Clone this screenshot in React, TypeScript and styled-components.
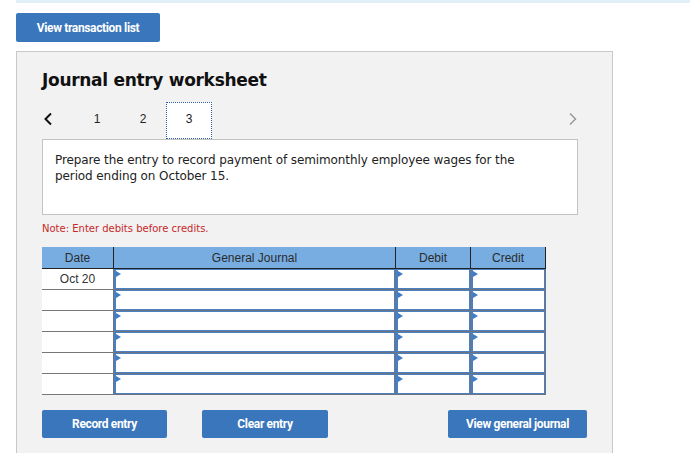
import styled, { createGlobalStyle } from 'styled-components';

const GlobalStyle = createGlobalStyle`
  body {
    margin: 0;
    background: #fff;
    font-family: "Liberation Sans", Arial, sans-serif;
    overflow: hidden;
  }
`;

const Page = styled.div`
  padding-left: 16px;
  width: 674px;
`;

const TopStrip = styled.div`
  height: 3px;
  background: #e1eff9;
`;

const BlueButton = styled.button<{ $w: number }>`
  width: ${(p) => p.$w}px;
  height: 29px;
  border: none;
  border-radius: 2px;
  background: #3a76bb;
  color: #fff;
  font-family: Roboto, "Liberation Sans", sans-serif;
  font-weight: 700;
  font-size: 12px;
  letter-spacing: -0.35px;
  padding: 0;
  cursor: pointer;
`;

const TopButton = styled(BlueButton)`
  margin-top: 10px;
  display: block;
`;

const Panel = styled.div`
  margin-top: 9px;
  width: 570px;
  height: 384px;
  background: #f2f2f2;
  border: 1px solid #c8c8c8;
  border-bottom: none;
  padding: 17px 0 0 25px;
`;

const Title = styled.h1`
  margin: 0;
  font-family: "DejaVu Sans", Verdana, sans-serif;
  font-weight: 700;
  font-size: 17px;
  line-height: 22px;
  letter-spacing: -0.3px;
  color: #111;
`;

const TabRow = styled.div`
  margin-top: 11px;
  width: 536px;
  height: 37px;
  display: flex;
  align-items: stretch;
`;

const Chevron = styled.div<{ $muted?: boolean }>`
  width: 31px;
  display: flex;
  align-items: center;
  padding-left: ${(p) => (p.$muted ? '0' : '1px')};
  padding-bottom: 3px;
  justify-content: ${(p) => (p.$muted ? 'flex-end' : 'flex-start')};
  svg {
    display: block;
  }
`;

const Spacer = styled.div`
  flex: 1;
`;

const Tab = styled.div<{ $active?: boolean }>`
  width: 46px;
  display: flex;
  align-items: center;
  justify-content: center;
  padding-bottom: 4px;
  font-size: 12px;
  color: #222;
  background: ${(p) => (p.$active ? '#fff' : 'transparent')};
  border: 1px dotted ${(p) => (p.$active ? '#2f5fae' : 'transparent')};
  box-sizing: border-box;
`;

const Prompt = styled.div`
  width: 536px;
  height: 76px;
  box-sizing: border-box;
  background: #fff;
  border: 1px solid #c3c3c3;
  padding: 12px 12px 0 12px;
  font-family: "DejaVu Sans", Verdana, sans-serif;
  font-size: 12px;
  line-height: 16px;
  letter-spacing: -0.1px;
  color: #222;
`;

const Note = styled.div`
  margin-top: 7px;
  font-family: "DejaVu Sans", Verdana, sans-serif;
  font-size: 10px;
  line-height: 13px;
  letter-spacing: 0;
  color: #c62828;
`;

const Table = styled.table`
  margin-top: 12px;
  border-collapse: collapse;
  table-layout: fixed;
`;

const Th = styled.th<{ $w: number }>`
  width: ${(p) => p.$w}px;
  height: 21px;
  padding: 0;
  background: #78ade2;
  font-weight: 400;
  font-size: 12px;
  color: #2b2b2b;
  border-bottom: 1px solid #222;
  border-right: 1px solid #222;
`;

const DateCell = styled.td`
  height: 20px;
  padding: 0;
  background: #fff;
  text-align: center;
  font-size: 12px;
  color: #333;
  border-bottom: 1px solid #777;
  vertical-align: top;
  line-height: 20px;
`;

const InputCell = styled.td`
  height: 20px;
  padding: 0;
  border: 1px solid #6b7480;
`;

const CellBox = styled.div`
  position: relative;
  height: 18px;
  background: #fff;
  border: 1px solid #4a7fc1;
  border-left-width: 2px;
  &::before {
    content: '';
    position: absolute;
    left: 0;
    top: 1px;
    border-top: 3px solid transparent;
    border-bottom: 3px solid transparent;
    border-left: 5px solid #3f7cc6;
  }
`;

const ActionRow = styled.div`
  margin-top: 15px;
  width: 545px;
  display: flex;
  align-items: center;
`;

const ActionButton = styled(BlueButton)<{ $gap?: number }>`
  height: 28px;
  margin-right: ${(p) => p.$gap ?? 0}px;
`;

const dates = ['Oct 20', '', '', '', '', ''];

const ChevronLeft = () => (
  <svg width="10" height="14" viewBox="0 0 10 14">
    <path d="M8 1.5 L2.5 7 L8 12.5" fill="none" stroke="#111" strokeWidth="2" />
  </svg>
);

const ChevronRight = () => (
  <svg width="10" height="14" viewBox="0 0 10 14">
    <path d="M2 1.5 L7.5 7 L2 12.5" fill="none" stroke="#9a9a9a" strokeWidth="1.5" />
  </svg>
);

export default function App() {
  return (
    <Page>
      <GlobalStyle />
      <TopStrip />
      <TopButton $w={144}>View transaction list</TopButton>
      <Panel>
        <Title>Journal entry worksheet</Title>
        <TabRow>
          <Chevron>
            <ChevronLeft />
          </Chevron>
          <Tab>1</Tab>
          <Tab>2</Tab>
          <Tab $active>3</Tab>
          <Spacer />
          <Chevron $muted>
            <ChevronRight />
          </Chevron>
        </TabRow>
        <Prompt>
          Prepare the entry to record payment of semimonthly employee wages for the
          <br />
          period ending on October 15.
        </Prompt>
        <Note>Note: Enter debits before credits.</Note>
        <Table>
          <thead>
            <tr>
              <Th $w={71}>Date</Th>
              <Th $w={281}>General Journal</Th>
              <Th $w={74}>Debit</Th>
              <Th $w={74}>Credit</Th>
            </tr>
          </thead>
          <tbody>
            {dates.map((d, i) => (
              <tr key={i}>
                <DateCell>{d}</DateCell>
                <InputCell>
                  <CellBox />
                </InputCell>
                <InputCell>
                  <CellBox />
                </InputCell>
                <InputCell>
                  <CellBox />
                </InputCell>
              </tr>
            ))}
          </tbody>
        </Table>
        <ActionRow>
          <ActionButton $w={125} $gap={35}>Record entry</ActionButton>
          <ActionButton $w={126}>Clear entry</ActionButton>
          <Spacer />
          <ActionButton $w={139}>View general journal</ActionButton>
        </ActionRow>
      </Panel>
    </Page>
  );
}
